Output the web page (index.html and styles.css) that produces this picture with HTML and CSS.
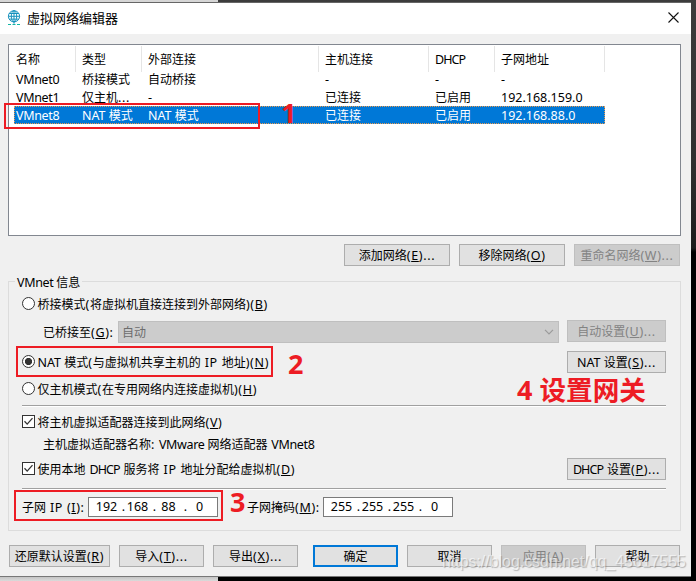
FILE: index.html
```html
<!DOCTYPE html>
<html lang="zh-CN">
<head>
<meta charset="utf-8">
<title>虚拟网络编辑器</title>
<link rel="stylesheet" href="styles.css">
</head>
<body>
<div class="window">
  <header class="titlebar">
    <svg class="logo" width="14" height="16" viewBox="0 0 14 16" fill="none" stroke="#1591bd" stroke-width="1">
      <circle cx="7" cy="6.3" r="5.6"/>
      <ellipse cx="7" cy="6.3" rx="2.7" ry="5.6"/>
      <path d="M1.4 6.3h11.2M2.2 3.5h9.6M2.2 9.1h9.6M7 .7v13"/>
      <path d="M1 14.5h3M5.5 14.5h3M10 14.5h3" stroke="#13b5a5"/>
    </svg>
    <h1>虚拟网络编辑器</h1>
    <svg class="close" width="11" height="11" viewBox="0 0 11 11" stroke="#111" stroke-width="1.1"><path d="M.5.5l10 10M10.5.5l-10 10"/></svg>
  </header>

  <main class="content">
    <section class="list">
      <div class="row head"><span>名称</span><span>类型</span><span>外部连接</span><span>主机连接</span><span><b class="caps">DHCP</b></span><span>子网地址</span></div>
      <div class="row"><span><b class="vm">VMnet0</b></span><span>桥接模式</span><span>自动桥接</span><span><b>-</b></span><span><b>-</b></span><span><b>-</b></span></div>
      <div class="row"><span><b class="vm">VMnet1</b></span><span>仅主机<b class="key">...</b></span><span><b>-</b></span><span>已连接</span><span>已启用</span><span><b>192.168.159.0</b></span></div>
      <div class="row selected"><span><b class="vm">VMnet8</b></span><span><b>NAT </b>模式</span><span><b>NAT </b>模式</span><span>已连接</span><span>已启用</span><span><b>192.168.88.0</b></span></div>
    </section>

    <div class="list-actions">
      <button>添加网络<b class="key">(<u>E</u>)...</b></button>
      <button>移除网络<b class="key">(<u>O</u>)</b></button>
      <button disabled>重命名网络<b class="key">(<u>W</u>)...</b></button>
    </div>

    <section class="group">
      <h2><b class="vm">VMnet </b>信息</h2>
      <div class="line bridge"><i class="radio"></i><span>桥接模式<b class="key">(</b>将虚拟机直接连接到外部网络<b class="key">)(<u>B</u>)</b></span></div>
      <div class="line adapter">
        <span class="adapter-label">已桥接至<b class="key">(<u>G</u>):</b></span>
        <div class="combo"><span>自动</span><svg width="10" height="6" viewBox="0 0 10 6" fill="none" stroke="#9b9b9b" stroke-width="1.2"><path d="M1 .8l4 4 4-4"/></svg></div>
        <button disabled>自动设置<b class="key">(<u>U</u>)...</b></button>
      </div>
      <div class="line nat"><i class="radio on"></i><span><b>NAT </b>模式<b class="key">(</b>与虚拟机共享主机的<b class="key"> IP </b>地址<b class="key">)(<u>N</u>)</b></span><button><b>NAT </b>设置<b class="key">(<u>S</u>)...</b></button></div>
      <div class="line host"><i class="radio"></i><span>仅主机模式<b class="key">(</b>在专用网络内连接虚拟机<b class="key">)(<u>H</u>)</b></span></div>
      <hr>
      <div class="line connect"><i class="check"><svg width="11" height="11" viewBox="0 0 11 11"><path d="M1.5 5.2l2.7 2.9 5.3-6"/></svg></i><span>将主机虚拟适配器连接到此网络<b class="key">(<u>V</u>)</b></span></div>
      <div class="line name"><span>主机虚拟适配器名称<b class="key">: </b><b class="vm">VMware </b>网络适配器<b class="key"> </b><b class="vm">VMnet8</b></span></div>
      <div class="line dhcp"><i class="check"><svg width="11" height="11" viewBox="0 0 11 11"><path d="M1.5 5.2l2.7 2.9 5.3-6"/></svg></i><span>使用本地<b class="key"> </b><b class="caps">DHCP</b><b class="key"> </b>服务将<b class="key"> IP </b>地址分配给虚拟机<b class="key">(<u>D</u>)</b></span><button><b class="caps">DHCP</b><b class="key"> </b>设置<b class="key">(<u>P</u>)...</b></button></div>
      <hr>
      <div class="line subnet">
        <span class="ip-label">子网<b class="key"> IP (<u>I</u>):</b></span>
        <div class="ip"><b>192</b><b>168</b><b>88</b><b>0</b></div>
        <span class="mask-label">子网掩码<b class="key">(<u>M</u>):</b></span>
        <div class="ip"><b>255</b><b>255</b><b>255</b><b>0</b></div>
      </div>
    </section>

    <footer class="actions">
      <button class="restore">还原默认设置<b class="key">(<u>R</u>)</b></button>
      <button>导入<b class="key">(<u>T</u>)...</b></button>
      <button>导出<b class="key">(<u>X</u>)...</b></button>
      <button class="primary">确定</button>
      <button>取消</button>
      <button disabled>应用<b class="key">(<u>A</u>)</b></button>
      <button>帮助</button>
    </footer>
  </main>
</div>

<div class="mark mark-row"></div>
<div class="mark mark-nat"></div>
<div class="mark mark-ip"></div>
<div class="note note-1">1</div>
<div class="note note-2">2</div>
<div class="note note-3">3</div>
<div class="note note-4">4 <span>设置网关</span></div>
<div class="watermark">https://blog.csdn.net/qq_45617555</div>
</body>
</html>
```

FILE: styles.css
```css
* { box-sizing: border-box; }

body {
  margin: 0;
  width: 696px;
  height: 581px;
  padding: 2px 5px 4px 0;
  overflow: hidden;
  position: relative;
  background:
    linear-gradient(#d6d6d6, #d6d6d6) 0 0 / 218px 2px no-repeat,
    linear-gradient(#c4c4c4, #dadada) 0 577px / 218px 4px no-repeat,
    linear-gradient(#3c3c3c 0, #303030 160px, #1c1c1c 248px, #000 252px);
  font: 12px/18px "Noto Sans CJK SC", sans-serif;
  color: #000;
}

b {
  font: 12.5px/1 "Noto Sans", sans-serif;
  white-space: pre;
}

.key { letter-spacing: .65px; }
.vm { letter-spacing: -.35px; }
.caps { letter-spacing: -.9px; }

u { text-underline-offset: 1px; text-decoration-thickness: 1px; }

.window {
  height: 575px;
  background: #f0f0f0;
  border-top: 1px solid #666;
  border-bottom: 1px solid #777;
}

.titlebar {
  display: flex;
  align-items: center;
  height: 31px;
  padding: 0 12px 0 7px;
  background: #fff;
}

.logo { margin-top: -1px; }
h1 { margin: -2px 0 0 6px; font-size: 13px; font-weight: 400; }
.close { margin: -2px 0 0 auto; }

.content { padding: 10px 10px 0 8px; }

.list {
  height: 192px;
  border: 1px solid #828790;
  background: #fff;
}

.row {
  display: grid;
  grid-template-columns: 62px 66px 177px 110px 66px 110px;
  width: 591px;
  height: 18px;
  margin-left: 5px;
  white-space: nowrap;
}

.row span { padding-left: 2px; }
.row span + span { padding-left: 6px; }
.head { height: 25px; padding: 1px 0 0; }
.head span { border-right: 1px solid #e5e5e5; line-height: 26px; }

.selected {
  background: #0078d7;
  color: #fff;
  outline: 1px dotted #e89a4f;
  outline-offset: -1px;
}

button {
  display: block;
  height: 22px;
  padding: 0;
  border: 1px solid #adadad;
  background: #e1e1e1;
  color: #000;
  font: inherit;
  line-height: 20px;
  text-align: center;
  white-space: nowrap;
}

button:disabled { background: #ccc; border-color: #bfbfbf; color: #838383; }

.list-actions { display: flex; justify-content: flex-end; gap: 9px; margin: 8px 1px 0 0; }
.list-actions button { width: 106px; }

.group {
  height: 250px;
  margin-top: 15px;
  padding: 0 14px 0 13px;
  border: 1px solid #dcdcdc;
}

h2 {
  width: 67px;
  height: 18px;
  margin: -9px 0 0 -7px;
  padding-left: 2px;
  background: #f0f0f0;
  font-size: 12px;
  font-weight: 400;
  white-space: nowrap;
}

.line { display: flex; align-items: center; height: 22px; white-space: nowrap; }
.line button { width: 99px; margin-left: auto; }
.bridge { margin-top: 2px; }
.adapter { margin-top: 5px; height: 24px; padding-left: 21px; }
.adapter-label { width: 75px; }

.combo {
  display: flex;
  align-items: center;
  justify-content: space-between;
  width: 441px;
  height: 22px;
  padding: 0 4px 0 3px;
  border: 1px solid #bfbfbf;
  background: #ccc;
  color: #6d6d6d;
}

.adapter button { margin-top: -2px; }
.nat { margin-top: 7px; }
.host { margin-top: 5px; }

.radio {
  width: 13px;
  height: 13px;
  margin: -2px 2.5px 0 0;
  border: 1px solid #333;
  border-radius: 50%;
  background: #fff;
}

.radio.on { background: radial-gradient(circle, #333 3.2px, #fff 4px); }

.check {
  width: 13px;
  height: 13px;
  margin: -1px 2.5px 0 0;
  border: 1px solid #333;
  background: #fff;
}

.check svg { display: block; fill: none; stroke: #333; stroke-width: 1.3; }

hr { width: 644px; height: 2px; margin: 5px 0 0; border: 0; border-top: 1px solid #a0a0a0; background: #fff; }
.connect { margin-top: 4px; }
.name { padding-left: 21px; }
.dhcp { margin-top: 3px; }
.dhcp + hr { margin-top: 8px; }
.subnet { margin-top: 6px; }
.ip-label { width: 66px; }
.mask-label { width: 76px; margin-left: 29px; }

.ip {
  display: grid;
  grid-template-columns: repeat(4, 31px);
  align-content: center;
  width: 130px;
  height: 20px;
  padding: 1px 0 0 2px;
  border: 1px solid #7a7a7a;
  background: #fff;
}

.ip b { display: flex; justify-content: center; position: relative; }
.ip b:not(:last-child)::after { content: "."; position: absolute; right: -3px; }

.actions { display: flex; gap: 9px; margin: 14px 0 0 1px; }
.actions button { width: 85px; }
.actions .restore { width: 101px; }
.actions .primary { margin-left: 6px; border: 2px solid #0078d7; line-height: 18px; }

.mark { position: absolute; border: 2px solid #ed1c24; }
.mark-row { left: 4px; top: 103px; width: 256px; height: 26px; }
.mark-nat { left: 16px; top: 346px; width: 257px; height: 31px; }
.mark-ip { left: 14px; top: 490px; width: 209px; height: 31px; }

.note { position: absolute; color: #ed1c24; font: bold 27px/30px "Noto Sans", "Noto Sans CJK SC", sans-serif; white-space: nowrap; }
.note-1 { left: 281px; top: 98px; }
.note-2 { left: 288px; top: 349px; }
.note-3 { left: 230px; top: 487px; }
.note-4 { left: 517px; top: 375px; }
.note span { font-size: 26.6px; }

.watermark {
  position: absolute;
  left: 442px;
  top: 552px;
  font: 15.9px/20px "Liberation Sans", sans-serif;
  color: rgba(255, 255, 255, .62);
  text-shadow: 1px 1px 1px rgba(90, 90, 90, .4);
  white-space: nowrap;
}
```
